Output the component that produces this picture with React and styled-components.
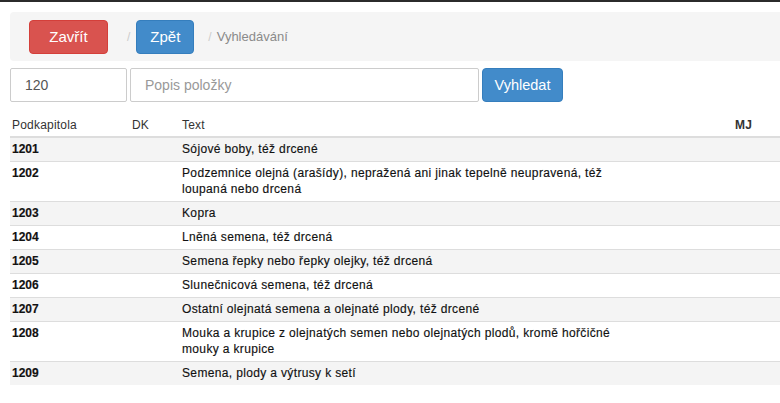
import React from 'react'
import styled, { createGlobalStyle } from 'styled-components'

const GlobalStyle = createGlobalStyle`
  html, body {
    margin: 0;
    padding: 0;
    background: #fff;
    overflow: hidden;
  }
  body {
    font-family: "Liberation Sans", Arial, sans-serif;
    font-size: 12px;
    color: #333;
  }
`

const Page = styled.div`
  border-top: 2px solid #2b2b2b;
  padding: 10px 0 0 10px;
  width: 780px;
  box-sizing: border-box;
`

const Breadcrumb = styled.div`
  display: flex;
  align-items: center;
  height: 49px;
  padding: 0 0 0 19px;
  background: #f5f5f5;
  border-radius: 4px 0 0 4px;
  box-sizing: border-box;
`

const Button = styled.button`
  height: 34px;
  padding: 0 ${props => props.pad || 13}px;
  min-width: ${props => props.width || 0}px;
  border: 1px solid ${props => (props.variant === 'danger' ? '#d43f3a' : '#357ebd')};
  border-radius: 4px;
  background: ${props => (props.variant === 'danger' ? '#d9534f' : '#428bca')};
  color: #fff;
  font-family: "Liberation Sans", Arial, sans-serif;
  font-size: ${props => props.size || 14}px;
  cursor: pointer;
  box-sizing: border-box;
`

const Divider = styled.span`
  color: #ccc;
  font-size: 12px;
  margin: ${props => props.space || '0 6px 0 19px'};
`

const Current = styled.span`
  color: #8a8a8a;
  font-size: 13px;
`

const SearchRow = styled.form`
  display: flex;
  gap: 3px;
  margin-top: 7px;
`

const Input = styled.input`
  width: ${props => props.width}px;
  height: 34px;
  padding: 0 14px;
  border: 1px solid #ccc;
  border-radius: 2px;
  font-family: "Liberation Sans", Arial, sans-serif;
  font-size: 14px;
  color: #555;
  box-sizing: border-box;
  &::placeholder {
    color: #999;
  }
`

const Table = styled.table`
  margin-top: 11px;
  width: 770px;
  border-collapse: collapse;
  table-layout: fixed;
  font-size: 12px;
  line-height: 16px;
`

const Th = styled.th`
  text-align: left;
  font-weight: ${props => (props.bold ? 'bold' : 'normal')};
  color: #333;
  letter-spacing: 0.2px;
  padding: 4px 2px 3px;
  border-bottom: 2px solid #ddd;
`

const Row = styled.tr`
  background: ${props => (props.striped ? '#f4f4f4' : '#fff')};
`

const Td = styled.td`
  padding: 3px 2px 4px;
  border-top: 1px solid #ddd;
  vertical-align: top;
  color: #111;
  font-weight: ${props => (props.bold ? 'bold' : 'normal')};
  letter-spacing: ${props => (props.bold ? '0' : '0.35px')};
  -webkit-text-stroke: 0.15px #111;
`

const rows = [
  ['1201', 'Sójové boby, též drcené'],
  ['1202', 'Podzemnice olejná (arašídy), nepražená ani jinak tepelně neupravená, též loupaná nebo drcená'],
  ['1203', 'Kopra'],
  ['1204', 'Lněná semena, též drcená'],
  ['1205', 'Semena řepky nebo řepky olejky, též drcená'],
  ['1206', 'Slunečnicová semena, též drcená'],
  ['1207', 'Ostatní olejnatá semena a olejnaté plody, též drcené'],
  ['1208', 'Mouka a krupice z olejnatých semen nebo olejnatých plodů, kromě hořčičné mouky a krupice'],
  ['1209', 'Semena, plody a výtrusy k setí'],
]

export default function App() {
  return (
    <>
      <GlobalStyle />
      <Page>
        <Breadcrumb>
          <Button variant="danger" width={79} size={15}>Zavřít</Button>
          <Divider>/</Divider>
          <Button variant="primary" width={55} size={15}>Zpět</Button>
          <Divider space="0 5px 0 14px">/</Divider>
          <Current>Vyhledávání</Current>
        </Breadcrumb>
        <SearchRow onSubmit={e => e.preventDefault()}>
          <Input width={117} defaultValue="120" />
          <Input width={349} placeholder="Popis položky" />
          <Button variant="primary" width={81} pad={11} size={14.5}>Vyhledat</Button>
        </SearchRow>
        <Table>
          <colgroup>
            <col style={{ width: 120 }} />
            <col style={{ width: 50 }} />
            <col style={{ width: 440 }} />
            <col style={{ width: 113 }} />
            <col style={{ width: 47 }} />
          </colgroup>
          <thead>
            <tr>
              <Th>Podkapitola</Th>
              <Th>DK</Th>
              <Th>Text</Th>
              <Th />
              <Th bold>MJ</Th>
            </tr>
          </thead>
          <tbody>
            {rows.map(([code, text], i) => (
              <Row key={code} striped={i % 2 === 0}>
                <Td bold>{code}</Td>
                <Td />
                <Td>{text}</Td>
                <Td />
                <Td />
              </Row>
            ))}
          </tbody>
        </Table>
      </Page>
    </>
  )
}
